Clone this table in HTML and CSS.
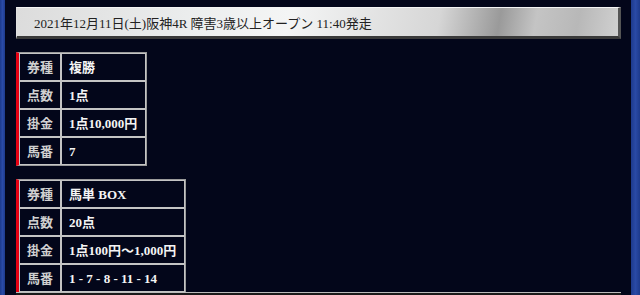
FILE: index.html
```html
<!DOCTYPE html>
<html lang="ja">
<head>
<meta charset="utf-8">
<link rel="stylesheet" href="styles.css">
</head>
<body>
<div class="page">
  <div class="stripe stripe-left"></div>
  <main class="main">
    <div class="race-title">2021年12月11日(土)阪神4R 障害3歳以上オープン 11:40発走</div>
    <table class="bet">
      <tr><th>券種</th><td>複勝</td></tr>
      <tr><th>点数</th><td>1点</td></tr>
      <tr><th>掛金</th><td>1点10,000円</td></tr>
      <tr><th>馬番</th><td>7</td></tr>
    </table>
    <table class="bet">
      <tr><th>券種</th><td>馬単 BOX</td></tr>
      <tr><th>点数</th><td>20点</td></tr>
      <tr><th>掛金</th><td>1点100円～1,000円</td></tr>
      <tr><th>馬番</th><td>1 - 7 - 8 - 11 - 14</td></tr>
    </table>
    <div class="next-bar"></div>
  </main>
  <div class="stripe stripe-right"></div>
</div>
</body>
</html>
```
FILE: styles.css
```css
html, body {
  margin: 0;
  padding: 0;
  background: #03061a;
  height: 100%;
  overflow: hidden;
}
.page {
  display: flex;
  height: 100%;
  font-family: "Liberation Serif", "Noto Sans CJK JP", serif;
}
.stripe {
  flex-shrink: 0;
  background: linear-gradient(90deg, #1d3a8c, #2a4aa6, #1d3a8c);
}
.stripe-left { width: 5px; }
.stripe-right { width: 9px; }
.main {
  flex: 1;
  padding: 7px 10px 0 11px;
  display: flex;
  flex-direction: column;
  align-items: flex-start;
  gap: 13px;
  overflow: hidden;
}
.main > * {
  flex-shrink: 0;
}
.race-title {
  align-self: stretch;
  box-sizing: border-box;
  height: 32px;
  padding: 0 16px 0 17px;
  display: flex;
  align-items: center;
  font-size: 13px;
  color: #222;
  border-top: 1px solid #f4f4f4;
  border-left: 1px solid #e0e0e0;
  border-right: 3px solid #555;
  border-bottom: 3px solid #3a3a3a;
  background: linear-gradient(100deg, #dcdcdc 0%, #eceeee 30%, #f4f5f5 45%, #d6d6d6 70%, #9a9a9a 80%, #c4c4c4 86%, #b8b8b8 93%, #d0d0d0 100%);
}
.bet {
  border-collapse: separate;
  border-spacing: 0;
  border-left: 3px solid #e60012;
  border-top: 1px solid #9a9a9a;
  border-right: 1px solid #9a9a9a;
  border-bottom: 1px solid #9a9a9a;
  font-size: 13px;
  font-weight: bold;
}
.bet th, .bet td {
  height: 26px;
  padding: 0 8px 0 7px;
  border: 1px solid #c4c4c4;
  white-space: nowrap;
  line-height: 1;
}
.bet th {
  width: 24px;
  padding: 0 7px;
  color: #d0d0d0;
  text-align: center;
}
.bet td {
  color: #f4f4f4;
  text-align: left;
}
.next-bar {
  align-self: stretch;
  height: 6px;
  margin-top: -14px;
  border-top: 1px solid #bbbbbb;
  background: #1a1a1a;
}
```
